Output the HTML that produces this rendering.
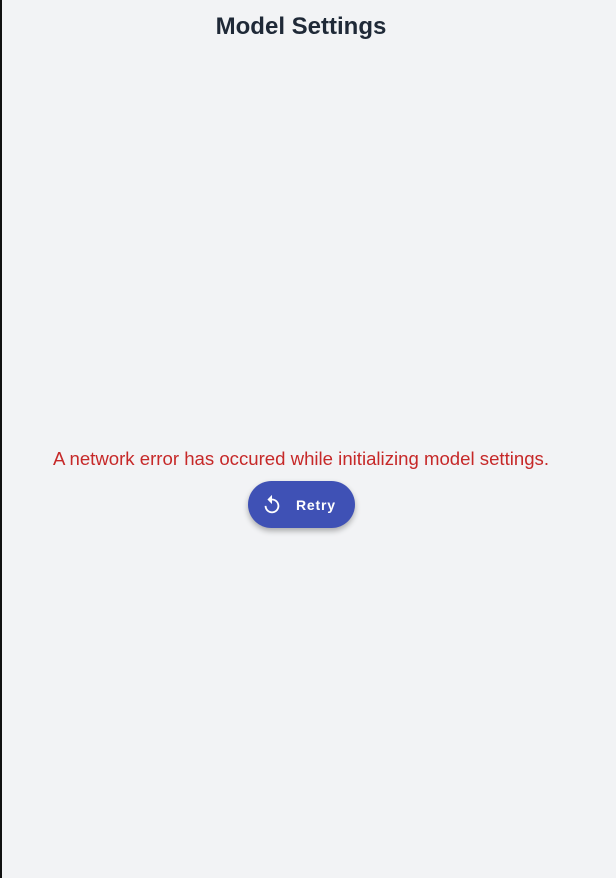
<!DOCTYPE html>
<html><head><style>
html,body{margin:0;padding:0}
body{width:616px;height:878px;background:#f2f3f5;position:relative;overflow:hidden;font-family:"Liberation Sans",sans-serif}
.bl{position:absolute;left:0;top:0;width:2px;height:878px;background:#111}
h1{position:absolute;left:0;width:602px;top:13px;margin:0;text-align:center;font-size:24px;font-weight:bold;color:#1f2937}
.err{position:absolute;left:0;width:602px;top:448px;text-align:center;font-size:18.6px;color:#c62828}
.btn{position:absolute;left:248px;top:481px;width:107px;height:47px;border-radius:24px;background:#3f51b5;box-shadow:0 3px 6px rgba(0,0,0,.3);color:#fff;font-size:14px;font-weight:bold;letter-spacing:.8px}
.btn span{position:absolute;left:48px;top:16px}
.btn svg{position:absolute;left:13px;top:13px}
</style></head><body>
<div class="bl"></div>
<h1>Model Settings</h1>
<div class="err">A network error has occured while initializing model settings.</div>
<div class="btn"><svg width="22" height="22" viewBox="0 0 24 24"><path fill="#fff" d="M12 5V1L7 6l5 5V7c3.31 0 6 2.69 6 6s-2.69 6-6 6-6-2.69-6-6H4c0 4.42 3.58 8 8 8s8-3.58 8-8-3.58-8-8-8z"/></svg><span>Retry</span></div>
</body></html>
